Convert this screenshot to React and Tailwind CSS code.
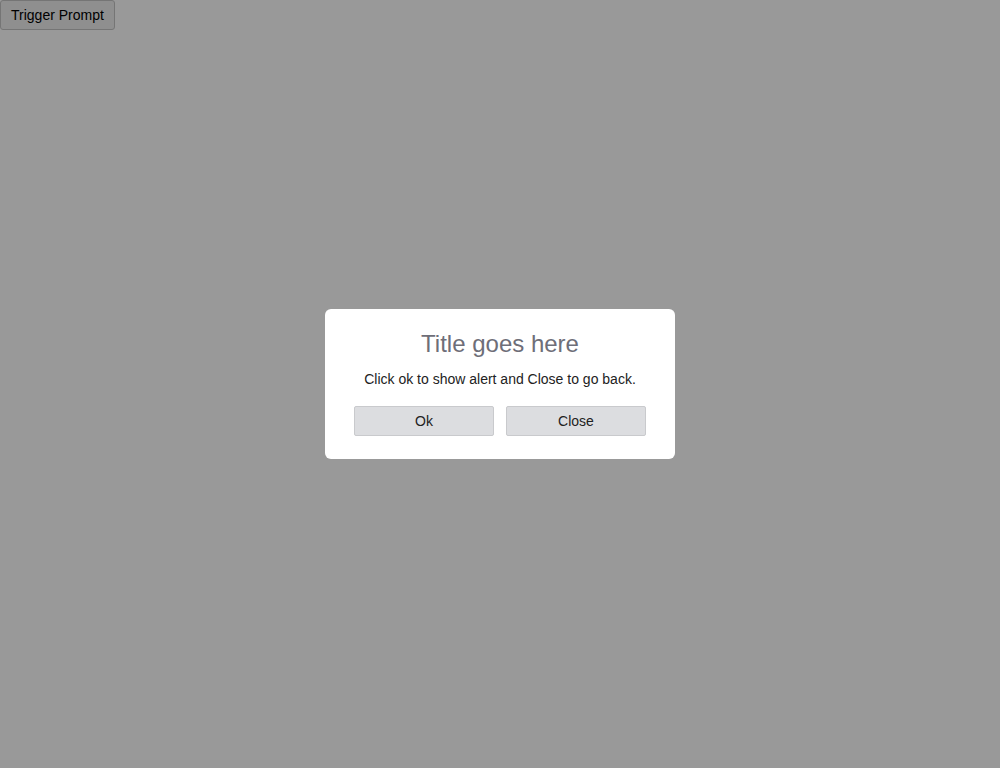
import React from 'react'

const App = () => {
  return (
    <div className="min-h-screen bg-white" style={{ fontFamily: '"Liberation Sans", Arial, sans-serif' }}>
      <button className="h-[30px] px-[10px] text-[14px] text-black bg-[#efefef] border border-[#c4c4c4] rounded-[3px]">
        Trigger Prompt
      </button>

      {/* overlay */}
      <div className="fixed inset-0 bg-black/40 flex items-center justify-center">
        <div className="w-[350px] bg-white rounded-[6px] pt-[21px] pb-[23px] text-center">
          <h1 className="text-[24px] leading-[28px] text-[#6e6e78]">Title goes here</h1>
          <p className="mt-[11px] text-[14px] leading-[20px] text-[#222]">
            Click ok to show alert and Close to go back.
          </p>
          <div className="mt-[17px] flex justify-center gap-[12px]">
            <button className="w-[140px] h-[30px] text-[14px] text-[#222] bg-[#dcdde0] border border-[#c9cacd] rounded-[2px]">
              Ok
            </button>
            <button className="w-[140px] h-[30px] text-[14px] text-[#222] bg-[#dcdde0] border border-[#c9cacd] rounded-[2px]">
              Close
            </button>
          </div>
        </div>
      </div>
    </div>
  )
}

export default App
